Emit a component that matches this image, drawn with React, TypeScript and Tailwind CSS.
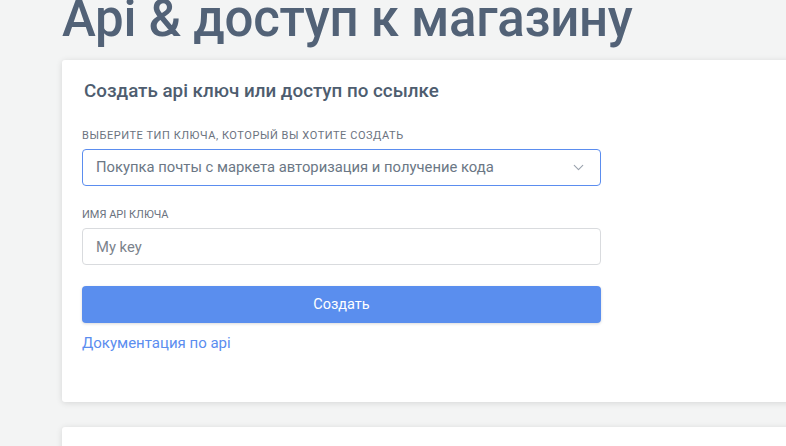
import { ChevronDown } from 'lucide-react'

const App = () => {
    return (
        <div className="h-[446px] w-full overflow-hidden bg-[#f3f4f4] pl-[62px] font-['Roboto',sans-serif]">
            <h1 className="text-[51px] font-medium leading-none text-[#526277] mt-[-7px] mb-[16px] tracking-[-0.3px] whitespace-nowrap">
                Api &amp; доступ к магазину
            </h1>

            <div className="bg-white rounded-l-[3px] shadow-[0_1px_6px_rgba(0,0,0,0.12)] pl-[20px] pt-[20px] pb-[49px] w-[800px]">
                <h2 className="text-[18.8px] font-medium text-[#4e5d6f] pl-[2px] mb-[27px] leading-[22px]">
                    Создать api ключ или доступ по ссылке
                </h2>

                <div className="w-[519px] flex flex-col">
                    <label className="text-[11px] uppercase text-[#6b7380] leading-[14px] mb-[6px] tracking-[0.55px]">
                        Выберите тип ключа, который вы хотите создать
                    </label>
                    <div className="h-[37px] border border-[#5b8def] rounded-[4px] flex items-center justify-between pl-[13px] pr-[13px] text-[14.8px] text-[#6b7785]">
                        <span>Покупка почты с маркета авторизация и получение кода</span>
                        <ChevronDown size={17} strokeWidth={1.6} className="text-[#9aa2ad]" />
                    </div>

                    <label className="text-[11px] uppercase text-[#6b7380] leading-[14px] mt-[22px] mb-[6px]">
                        Имя API ключа
                    </label>
                    <input
                        className="h-[37px] border border-[#d9dbde] rounded-[4px] px-[13px] text-[14.8px] text-[#6b7785] placeholder:text-[#7b838c] outline-none"
                        placeholder="My key"
                    />

                    <button className="mt-[21px] h-[37px] bg-[#5a8eee] text-white rounded-[4px] text-[14.5px] shadow-[0_1px_3px_rgba(0,0,0,0.15)]">
                        Создать
                    </button>

                    <a className="mt-[10px] text-[15px] text-[#5b8def] leading-[20px]" href="#">
                        Документация по api
                    </a>
                </div>
            </div>

            <div className="mt-[25px] bg-white shadow-[0_1px_6px_rgba(0,0,0,0.12)] h-[60px] w-[800px] rounded-l-[3px]" />
        </div>
    )
}

export default App
